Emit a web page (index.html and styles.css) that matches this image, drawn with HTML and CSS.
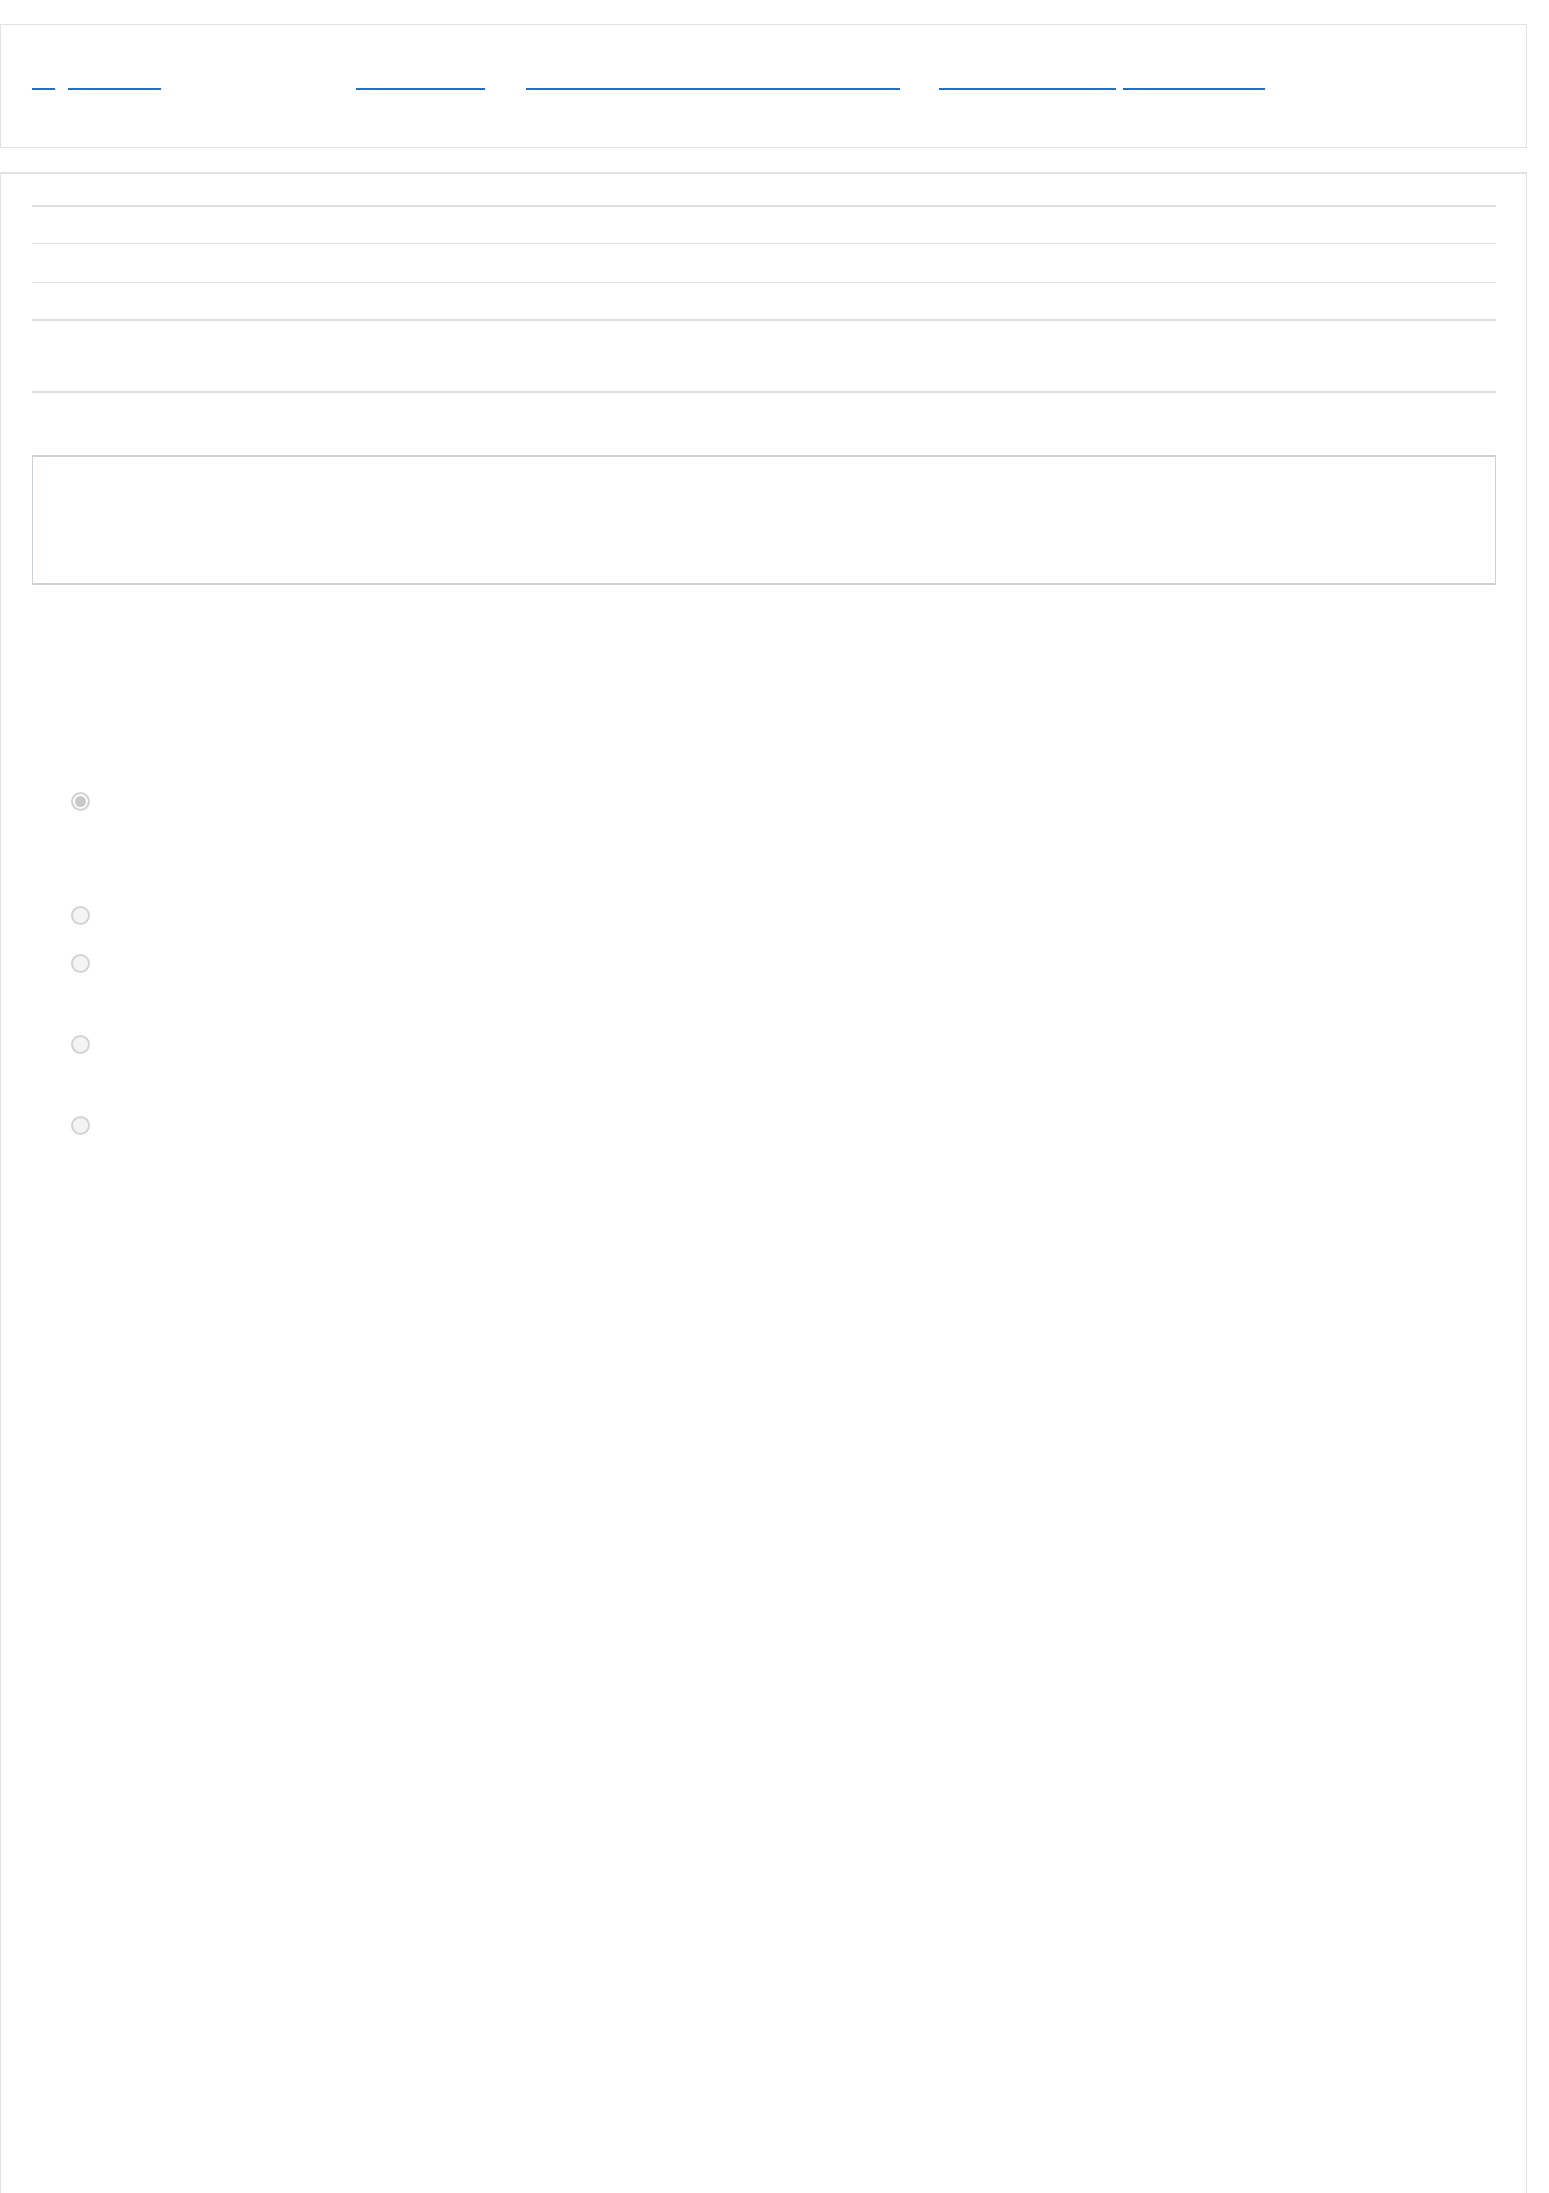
FILE: index.html
```html
<!DOCTYPE html>
<html lang="en">
<head>
<meta charset="utf-8">
<title>Survey</title>
<link rel="stylesheet" href="styles.css">
</head>
<body>
  <header class="topbar">
    <nav class="nav">
      <a class="nav-link l1" href="#">≡</a>
      <a class="nav-link l2" href="#">Survey</a>
      <a class="nav-link l3" href="#">Dashboard</a>
      <a class="nav-link l4" href="#">Customer satisfaction questionnaire</a>
      <a class="nav-link l5" href="#">My responses</a>
      <a class="nav-link l6" href="#">Sign out</a>
    </nav>
  </header>

  <main class="panel">
    <div class="info-table">
      <div class="info-row r1"><span class="cell">Survey</span></div>
      <div class="info-row r2"><span class="cell">Status</span></div>
      <div class="info-row r3"><span class="cell">Due date</span></div>
    </div>
    <div class="section-intro"><p class="hidden-text">Please answer the question below.</p></div>
    <div class="comment-box"><p class="hidden-text">Instructions</p></div>

    <fieldset class="question">
      <legend class="hidden-text">How satisfied are you?</legend>
      <label class="option o1"><input type="radio" name="q1" checked disabled><span class="hidden-text">Very satisfied</span></label>
      <label class="option o2"><input type="radio" name="q1" disabled><span class="hidden-text">Satisfied</span></label>
      <label class="option o3"><input type="radio" name="q1" disabled><span class="hidden-text">Neutral</span></label>
      <label class="option o4"><input type="radio" name="q1" disabled><span class="hidden-text">Dissatisfied</span></label>
      <label class="option o5"><input type="radio" name="q1" disabled><span class="hidden-text">Very dissatisfied</span></label>
    </fieldset>
  </main>
</body>
</html>
```

FILE: styles.css
```css
* { box-sizing: border-box; }

html, body {
  margin: 0;
  padding: 0;
  background: #ffffff;
  font-family: "Liberation Sans", Arial, sans-serif;
  font-size: 16px;
}

body {
  padding-top: 24px;
  width: 1549px;
  height: 2193px;
  overflow: hidden;
}

.hidden-text {
  color: transparent;
  margin: 0;
}

/* ---------- top bar ---------- */
.topbar {
  width: 1527px;
  height: 124px;
  border: 1px solid #e2e2e2;
  background: #ffffff;
}

.nav {
  display: flex;
  align-items: flex-start;
  padding: 43px 30px 0 31px;
}

.nav-link {
  display: block;
  height: 22px;
  line-height: 20px;
  overflow: hidden;
  white-space: nowrap;
  color: transparent;
  text-decoration: none;
  border-bottom: 2px solid #1a73c9;
}

.l1 { width: 23px; }
.l2 { width: 93px; margin-left: 13px; }
.l3 { width: 129px; margin-left: 195px; }
.l4 { width: 374px; margin-left: 41px; }
.l5 { width: 177px; margin-left: 39px; }
.l6 { width: 142px; margin-left: 7px; }

/* ---------- main panel ---------- */
.panel {
  margin-top: 24px;
  width: 1527px;
  height: 2021px;
  border: 1px solid #e2e2e2;
  border-top: 2px solid #e2e2e2;
  border-bottom: 0;
  padding: 31px 30px 0 31px;
  background: #ffffff;
}

.info-table {
  border-top: 2px solid #dde1e6;
}

.info-row {
  border-bottom: 1px solid #e1e1e1;
  display: flex;
  align-items: center;
}

.info-row .cell { color: transparent; }

.r1 { height: 37px; }
.r2 { height: 39px; }
.r3 { height: 38px; border-bottom: 2px solid #dde1e6; }

.section-intro {
  height: 72px;
  border-bottom: 2px solid #dde1e6;
}

.comment-box {
  margin-top: 62px;
  height: 130px;
  border: 1px solid #cbcfd8;
  border-top-width: 2px;
  border-bottom-width: 2px;
}

.question {
  border: 0;
  margin: 0;
  padding: 0 0 0 39px;
}

.question legend {
  padding: 0;
  height: 0;
}

.option {
  display: flex;
  align-items: center;
  height: 19px;
}

.o1 { margin-top: 207px; }
.o2 { margin-top: 95px; }
.o3 { margin-top: 29px; }
.o4 { margin-top: 62px; }
.o5 { margin-top: 62px; }

.option input {
  -webkit-appearance: none;
  appearance: none;
  width: 19px;
  height: 19px;
  margin: 0 12px 0 0;
  border: 2px solid #d3d3d3;
  border-radius: 50%;
  background: #f4f4f4;
}

.option input:checked {
  background: #c8c8c8;
  box-shadow: inset 0 0 0 2px #ffffff;
}
```
